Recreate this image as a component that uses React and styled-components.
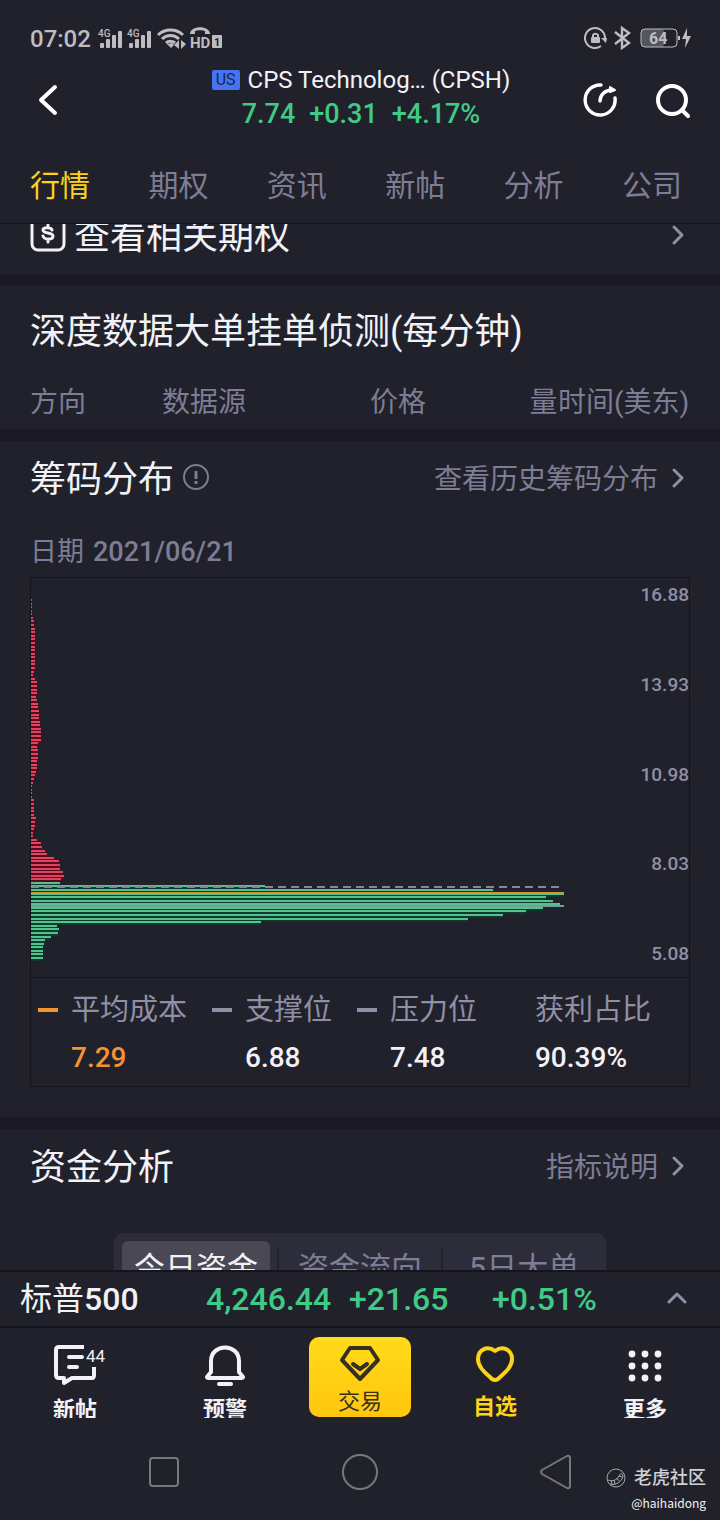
import React from 'react';
import styled, { createGlobalStyle } from 'styled-components'

const colors = {
    bg: '#21212b',
    band: '#1b1a24',
    line: '#15141d',
    text: '#f2f2f6',
    muted: '#7d7d95',
    label: '#8f8fa6',
    green: '#3fcb86',
    yellow: '#fdd21b',
    orange: '#f4932f',
    status: '#bdbdc1',
}

const tabs = ['行情', '期权', '资讯', '新帖', '分析', '公司']
const axis = ['16.88', '13.93', '10.98', '8.03', '5.08']
const levels = [
    { name: '平均成本', value: '7.29', mark: colors.orange, color: colors.orange },
    { name: '支撑位', value: '6.88', mark: colors.label },
    { name: '压力位', value: '7.48', mark: colors.label },
    { name: '获利占比', value: '90.39%', mark: 'transparent' },
]

// chip volume per price step, from the highest price down
const chips = [
    1, 1, 1, 1, 1, 2, 3, 3, 4, 4, 4, 4, 4, 4, 4, 4, 4, 4, 4, 4,
    3, 2, 4, 6, 6, 6, 6, 5, 6, 7, 7, 8, 8, 8, 9, 9, 10, 10, 10, 10,
    7, 6, 7, 7, 7, 6, 6, 6, 5, 4, 3, 2, 1, 1, 1, 1, 3, 3, 3, 3,
    3, 5, 4, 4, 3, 2, 2, 6, 10, 11, 14, 16, 23, 28, 29, 29, 32, 33, 30,
    29, 234, 462, 533, 515, 522, 529, 512, 495, 472, 437, 230,
    26, 28, 27, 20, 14, 13, 12, 12, 12, 12,
]
const firstGreen = 79

const Chevron = ({ up }) => (
    <svg width="16" height="24" viewBox="0 0 16 24" fill="none" stroke={colors.label} strokeWidth="3" strokeLinecap="round" strokeLinejoin="round" overflow="visible">
        <path d={up ? 'M0 15l8-8 8 8' : 'M4 4l8 8-8 8'} />
    </svg>
)

const StatusLeft = () => (
    <svg width="128" height="26" viewBox="96 26 128 26" fill={colors.status}>
        {[0, 29].map(x => (
            <g key={x} transform={`translate(${x} 0)`}>
                <text x="98" y="37" fontSize="10" fontWeight="500">4G</text>
                <rect x="100" y="43" width="4" height="5" rx="1" />
                <rect x="106" y="39" width="4" height="9" rx="1" />
                <rect x="112" y="35" width="4" height="13" rx="1" />
                <rect x="118" y="31" width="4" height="17" rx="1" />
            </g>
        ))}
        <g fill="none" stroke={colors.status} strokeWidth="3">
            <path d="M158 35a18 18 0 0 1 25 0" />
            <path d="M162 39a12 12 0 0 1 17 0" />
            <path d="M166 43a7 7 0 0 1 9 0" />
        </g>
        <path d="M167 44l4 4 3-3-2-2z" />
        <path d="M179 40v9l-5-4zM181 40v9l5-5z" />
        <path d="M190 34c0-9 20-9 20 0h-5v-3c-2-1-8-1-10 0v3z" />
        <text x="190" y="48" fontSize="15" fontWeight="700">HD</text>
        <rect x="212" y="35" width="10" height="13" rx="1" />
        <text x="214" y="46" fontSize="11" fontWeight="700" fill={colors.bg}>1</text>
    </svg>
)

const StatusRight = () => (
    <svg width="108" height="26" viewBox="584 26 108 26" fill={colors.status}>
        <path d="M601 46a10 10 0 1 1 4-8" fill="none" stroke={colors.status} strokeWidth="2" />
        <path d="M601 38h6l-1 5z" />
        <rect x="591" y="37" width="9" height="6" rx="1" />
        <path d="M593 37v-2a3 3 0 0 1 5 0v2" fill="none" stroke={colors.status} strokeWidth="2" />
        <path d="M615 32l14 11-7 5V28l7 5-14 11" fill="none" stroke={colors.status} strokeWidth="2.4" />
        <rect x="641" y="29" width="23" height="18" rx="3" fill="#55555d" />
        <rect x="641" y="29" width="36" height="18" rx="4" fill="none" stroke={colors.status} />
        <text x="649" y="44" fontSize="16" fontWeight="700">64</text>
        <rect x="678" y="36" width="2" height="4" />
        <path d="M687 28l-5 11h4l-1 9 6-12h-4z" />
    </svg>
)

const ChipChart = () => (
    <Plot viewBox="0 0 534 399" preserveAspectRatio="none" shapeRendering="crispEdges" role="img" aria-label="筹码分布">
        {chips.map((w, i) => (
            <rect key={`s${i}`} x="0" y={Math.round(21 + i * 3.58)} width={w} height="4" fill={i < firstGreen ? '#570a20' : '#0d3a2c'} />
        ))}
        {chips.map((w, i) => (
            <rect key={i} x="0" y={Math.round(21 + i * 3.58)} width={w} height="2" fill={i < firstGreen ? '#e04560' : '#50c48b'} />
        ))}
        <path d="M0 309H533" stroke="#85869a" strokeWidth="2" strokeDasharray="8 5" />
        <path d="M0 315H533" stroke="#dd9138" strokeWidth="2" />
        <path d="M0 328H533" stroke="#7d9a99" strokeWidth="2" />
    </Plot>
)

const App = () => {

    return (
        <Screen>
            <GlobalStyle />

            <StatusBar>
                <Clock>07:02</Clock>
                <StatusLeft />
                <Spacer />
                <StatusRight />
            </StatusBar>

            <Header>
                <IconButton aria-label="返回">
                    <svg width="36" height="40" viewBox="30 77 36 40" fill="none" stroke="#fff" strokeWidth="4" strokeLinecap="round" strokeLinejoin="round">
                        <path d="M55 87L41 100l14 13" />
                    </svg>
                </IconButton>
                <Quote>
                    <Name><Market>US</Market>CPS Technolog… (CPSH)</Name>
                    <Price><span>7.74</span><span>+0.31</span><span>+4.17%</span></Price>
                </Quote>
                <Actions>
                    <IconButton aria-label="刷新">
                        <svg width="40" height="40" viewBox="580 77 40 40" fill="none" stroke="#fff" strokeWidth="3.4" strokeLinecap="round" strokeLinejoin="round">
                            <path d="M601 85a15 15 0 1 0 14 13" />
                            <path d="M600 101c0-6 5-11 12-11" />
                            <path d="M610 87l5 3-5 2z" strokeWidth="2" fill="#fff" />
                        </svg>
                    </IconButton>
                    <IconButton aria-label="搜索">
                        <svg width="40" height="40" viewBox="652 77 40 40" fill="none" stroke="#fff" strokeWidth="4" strokeLinecap="round" overflow="visible">
                            <circle cx="672" cy="100" r="14" />
                            <path d="M682 110l6 6" />
                        </svg>
                    </IconButton>
                </Actions>
            </Header>

            <Tabs>
                {tabs.map((t, i) => <Tab href="#" key={t} $active={i === 0}>{t}</Tab>)}
            </Tabs>

            <Content>
                <OptionsLink href="#">
                    <svg width="36" height="36" viewBox="0 0 36 36" fill="none" stroke={colors.text} strokeWidth="3" strokeLinecap="round">
                        <rect x="2" y="1" width="32" height="32" rx="6" />
                        <path d="M22 13c-1-3-9-3-9 0 0 4 10 2 10 6 0 4-9 4-10 0M18 8v2M18 22v3" />
                    </svg>
                    <Title>查看相关期权</Title>
                    <Spacer />
                    <Chevron />
                </OptionsLink>

                <Orders>
                    <Title>深度数据大单挂单侦测(每分钟)</Title>
                    <OrderTable>
                        <thead>
                            <tr>
                                <Column $share={200}>方向</Column>
                                <Column $share={315}>数据源</Column>
                                <Column $share={242}>价格</Column>
                                <Column $share={43}>量</Column>
                                <Column $share={200}>时间(美东)</Column>
                            </tr>
                        </thead>
                    </OrderTable>
                </Orders>

                <Section>
                    <SectionHead>
                        <Title>筹码分布</Title>
                        <svg width="28" height="28" viewBox="0 0 28 28" fill="none" stroke={colors.muted} strokeWidth="2">
                            <circle cx="14" cy="13" r="12" />
                            <path d="M14 7v8M14 17v3" strokeWidth="3" />
                        </svg>
                        <Spacer />
                        <MoreLink href="#"><span>查看历史筹码分布</span><Chevron /></MoreLink>
                    </SectionHead>
                    <DateLine>日期<time>2021/06/21</time></DateLine>
                    <ChartBox>
                        <ChartArea>
                            <ChipChart />
                            <Axis>{axis.map(a => <span key={a}>{a}</span>)}</Axis>
                        </ChartArea>
                        <Legend>
                            {levels.map(l => (
                                <Level key={l.name}>
                                    <Mark $color={l.mark} />
                                    <LevelName>{l.name}</LevelName>
                                    <LevelValue $color={l.color}>{l.value}</LevelValue>
                                </Level>
                            ))}
                        </Legend>
                    </ChartBox>
                </Section>

                <Section>
                    <SectionHead>
                        <Title>资金分析</Title>
                        <Spacer />
                        <MoreLink href="#"><span>指标说明</span><Chevron /></MoreLink>
                    </SectionHead>
                    <Segments>
                        <Segment $active>今日资金</Segment>
                        <Segment>资金流向</Segment>
                        <Segment>5日大单</Segment>
                    </Segments>
                </Section>
            </Content>

            <IndexBar>
                <IndexName>标普<b>500</b></IndexName>
                <span>4,246.44</span>
                <span>+21.65</span>
                <span>+0.51%</span>
                <Chevron up />
            </IndexBar>

            <BottomNav>
                <NavItem>
                    <svg width="60" height="44" viewBox="45 1342 60 44" fill="none" stroke={colors.text} strokeWidth="4" strokeLinejoin="round" overflow="visible">
                        <path d="M84 1347H59q-3 0-3 3v25q0 3 3 3h5v5l8-5h20q2 0 2-3v-8" />
                        <path d="M69 1357h13M69 1367h8" strokeLinecap="round" />
                        <text x="86" y="1362" fontSize="17" fontWeight="400" stroke="none" fill={colors.text}>44</text>
                    </svg>
                    <span>新帖</span>
                </NavItem>
                <NavItem>
                    <svg width="60" height="44" viewBox="195 1342 60 44" fill="none" stroke={colors.text} strokeWidth="4" strokeLinecap="round" strokeLinejoin="round">
                        <path d="M211 1372v-11c0-18 28-18 28 0v11l4 5c0 1-1 1-2 1h-32c-1 0-2 0-2-1z" />
                        <path d="M219 1384h12" />
                    </svg>
                    <span>预警</span>
                </NavItem>
                <TradeButton>
                    <svg width="44" height="38" viewBox="338 1344 44 38" fill="none" stroke="#35301f" strokeWidth="4" strokeLinecap="round" strokeLinejoin="round">
                        <path d="M350 1348h20l8 12-18 19-18-19z" />
                        <path d="M353 1364l7 5 7-5" />
                    </svg>
                    <span>交易</span>
                </TradeButton>
                <NavItem $active>
                    <svg width="60" height="44" viewBox="465 1342 60 44" fill="none" stroke={colors.yellow} strokeWidth="4" strokeLinejoin="round">
                        <path d="M495 1351c-8-6-17-1-17 8 0 9 9 15 14 20q3 2 6 0c5-5 14-11 14-20 0-9-9-14-17-8z" />
                    </svg>
                    <span>自选</span>
                </NavItem>
                <NavItem>
                    <svg width="60" height="44" viewBox="615 1342 60 44" fill={colors.text}>
                        {[1354, 1366, 1378].map(y => [632, 645, 658].map(x => <circle key={`${x}-${y}`} cx={x} cy={y} r="3.4" />))}
                    </svg>
                    <span>更多</span>
                </NavItem>
            </BottomNav>

            <SystemNav>
                <IconButton aria-label="最近任务">
                    <svg width="40" height="40" viewBox="0 0 40 40" fill="none" stroke="#77777e" strokeWidth="2"><rect x="6" y="6" width="28" height="28" rx="3" /></svg>
                </IconButton>
                <IconButton aria-label="主屏幕">
                    <svg width="40" height="40" viewBox="0 0 40 40" fill="none" stroke="#77777e" strokeWidth="2"><circle cx="20" cy="20" r="17" /></svg>
                </IconButton>
                <IconButton aria-label="后退">
                    <svg width="40" height="40" viewBox="0 0 40 40" fill="none" stroke="#77777e" strokeWidth="2" strokeLinejoin="round"><path d="M6 18L31 4q3-1 3 2v28q0 3-3 2L6 22q-2-2 0-4z" /></svg>
                </IconButton>
                <Watermark>
                    <Brand>
                        <svg width="20" height="20" viewBox="0 0 20 20" fill="none" stroke="#a9a9b0" strokeWidth="1">
                            <circle cx="10" cy="10" r="9" />
                            <path d="M2 12c4 2 9 0 11-4 1-3 4-3 4 0-1 6-8 10-13 8M5 12l1 4M8 12l1 4M11 10l2 3M13 8l3 1" />
                        </svg>
                        老虎社区
                    </Brand>
                    <small>@haihaidong</small>
                </Watermark>
            </SystemNav>
        </Screen>
    )
}

const GlobalStyle = createGlobalStyle`
    * {
        box-sizing: border-box;
    }
    body {
        margin: 0;
        background: ${colors.bg};
        color: ${colors.text};
        font-family: Roboto, "Noto Sans CJK SC", sans-serif;
    }
    a {
        color: inherit;
        text-decoration: none;
    }
    button {
        padding: 0;
        border: 0;
        background: none;
        color: inherit;
        font: inherit;
    }
    svg {
        display: block;
        flex: none;
    }
`

const Screen = styled.div`
    display: flex;
    flex-direction: column;
    height: 100vh;
`

const Spacer = styled.div`
    flex: 1;
`

const StatusBar = styled.div`
    display: flex;
    align-items: center;
    padding: 14px 28px 0 30px;
    height: 63px;
`

const Clock = styled.span`
    width: 66px;
    color: ${colors.status};
    font-size: 24px;
    font-weight: 500;
`

const Header = styled.header`
    display: grid;
    grid-template-columns: 1fr auto 1fr;
    align-items: center;
    padding: 0 28px 0 30px;
`

const IconButton = styled.button`
    display: flex;
`

const Quote = styled.div`
    line-height: 34px;
    white-space: nowrap;
`

const Name = styled.div`
    display: flex;
    align-items: center;
    gap: 8px;
    font-size: 24px;
`

const Market = styled.span`
    padding: 0 4px;
    border-radius: 2px;
    background: #4474f4;
    color: #1c2547;
    font-size: 16px;
    line-height: 20px;
`

const Price = styled.div`
    display: flex;
    justify-content: center;
    gap: 14px;
    color: ${colors.green};
    font-size: 27px;
    font-weight: 500;
`

const Actions = styled.div`
    display: flex;
    justify-content: flex-end;
    gap: 32px;
`

const Tabs = styled.nav`
    display: flex;
    justify-content: space-between;
    padding: 33px 38px 15px 30px;
    border-bottom: 1px solid ${colors.line};
`

const Tab = styled.a`
    color: ${({ $active }) => $active ? colors.yellow : colors.muted};
    font-size: 30px;
    line-height: 44px;
`

const Content = styled.main`
    flex: 1;
    min-height: 0;
    overflow: hidden;
`

const OptionsLink = styled.a`
    display: flex;
    align-items: center;
    gap: 8px;
    height: 78px;
    margin-top: -28px;
    padding: 0 34px 0 30px;
`

const Title = styled.h2`
    margin: 0;
    padding-top: 4px;
    font-size: 36px;
    font-weight: 400;
    line-height: 48px;
`

const Section = styled.section`
    padding: 11px 30px 30px;
    border-top: 12px solid ${colors.band};
`

const Orders = styled(Section)`
    padding: 18px 30px 6px;
`

const OrderTable = styled.table`
    width: 100%;
    margin-top: 27px;
    border-collapse: collapse;
    table-layout: fixed;
`

const Column = styled.th`
    width: ${({ $share }) => $share / 10}%;
    padding: 0;
    color: ${colors.muted};
    font-size: 28px;
    font-weight: 400;
    line-height: 40px;
    text-align: left;
    white-space: nowrap;
`

const SectionHead = styled.div`
    display: flex;
    align-items: center;
    gap: 8px;
`

const MoreLink = styled.a`
    display: flex;
    align-items: center;
    gap: 12px;
    padding-right: 4px;
    color: ${colors.muted};
    font-size: 28px;
    line-height: 40px;
    span {
        padding-top: 4px;
    }
`

const DateLine = styled.p`
    display: flex;
    gap: 9px;
    margin: 28px 0 5px;
    color: ${colors.muted};
    font-size: 27px;
    line-height: 40px;
    time {
        font-weight: 500;
    }
`

const ChartBox = styled.div`
    border: 1px solid ${colors.line};
`

const ChartArea = styled.div`
    display: flex;
    border-bottom: 1px solid ${colors.line};
`

const Plot = styled.svg`
    flex: 1;
    min-width: 0;
    height: 399px;
`

const Axis = styled.div`
    display: flex;
    flex-direction: column;
    justify-content: space-between;
    width: 124px;
    padding: 5px 0 11px;
    color: ${colors.label};
    font-size: 19px;
    font-weight: 500;
    line-height: 24px;
    text-align: right;
`

const Legend = styled.div`
    display: flex;
    justify-content: space-between;
    padding: 11px 38px 10px 7px;
`

const Level = styled.div`
    display: grid;
    grid-template-columns: 20px auto;
    column-gap: 13px;
    row-gap: 9px;
    align-items: center;
`

const Mark = styled.i`
    height: 4px;
    background: ${({ $color }) => $color};
`

const LevelName = styled.span`
    color: ${colors.label};
    font-size: 29px;
    line-height: 42px;
`

const LevelValue = styled.span`
    grid-column: 2;
    color: ${({ $color }) => $color || colors.text};
    font-size: 28px;
    font-weight: 500;
    line-height: 36px;
`

const Segments = styled.div`
    display: flex;
    justify-content: center;
    gap: 16px;
    width: fit-content;
    margin: 41px auto 0;
    padding: 8px;
    border-radius: 10px;
    background: #2c2c3a;
`

const Segment = styled.button`
    position: relative;
    width: 148px;
    border-radius: 6px;
    background: ${({ $active }) => $active ? '#4a4855' : 'none'};
    color: ${({ $active }) => $active ? colors.text : colors.muted};
    font-size: 31px;
    line-height: 56px;
    &:not(:first-child)::before {
        content: '';
        position: absolute;
        left: -9px;
        top: 8px;
        bottom: 8px;
        width: 2px;
        background: ${colors.bg};
    }
`

const IndexBar = styled.div`
    display: grid;
    grid-template-columns: 186fr 143fr 143fr 177fr 31fr;
    align-items: center;
    padding: 0 20px;
    border-top: 2px solid ${colors.line};
    border-bottom: 2px solid ${colors.line};
    color: ${colors.green};
    font-size: 32px;
    font-weight: 500;
    line-height: 54px;
`

const IndexName = styled.span`
    color: ${colors.text};
    font-weight: 400;
    b {
        font-weight: 500;
    }
`

const BottomNav = styled.nav`
    display: grid;
    grid-template-columns: 5fr 5fr 4fr 5fr 5fr;
    height: 90px;
    overflow: hidden;
`

const NavItem = styled.button`
    display: flex;
    flex-direction: column;
    align-items: center;
    gap: 8px;
    padding-top: 14px;
    color: ${({ $active }) => $active ? colors.yellow : colors.text};
    font-size: 22px;
    font-weight: 700;
    line-height: ${({ $active }) => $active ? 26 : 32}px;
`

const TradeButton = styled.button`
    display: flex;
    flex-direction: column;
    align-items: center;
    width: 102px;
    height: 80px;
    margin: 9px auto 0;
    padding-top: 7px;
    border-radius: 10px;
    background: linear-gradient(#ffdb1a, #ffc60d);
    color: #35301f;
    font-size: 22px;
    line-height: 40px;
`

const SystemNav = styled.div`
    position: relative;
    display: flex;
    justify-content: center;
    gap: 156px;
    padding: 34px 0 28px;
`

const Watermark = styled.div`
    position: absolute;
    right: 14px;
    bottom: 6px;
    text-align: right;
    small {
        display: block;
        font-family: "Noto Sans CJK SC", sans-serif;
        font-size: 12px;
        line-height: 22px;
    }
`

const Brand = styled.div`
    display: flex;
    align-items: center;
    gap: 8px;
    color: #d0d0d5;
    font-size: 18px;
    font-weight: 500;
    line-height: 28px;
`

export default App
